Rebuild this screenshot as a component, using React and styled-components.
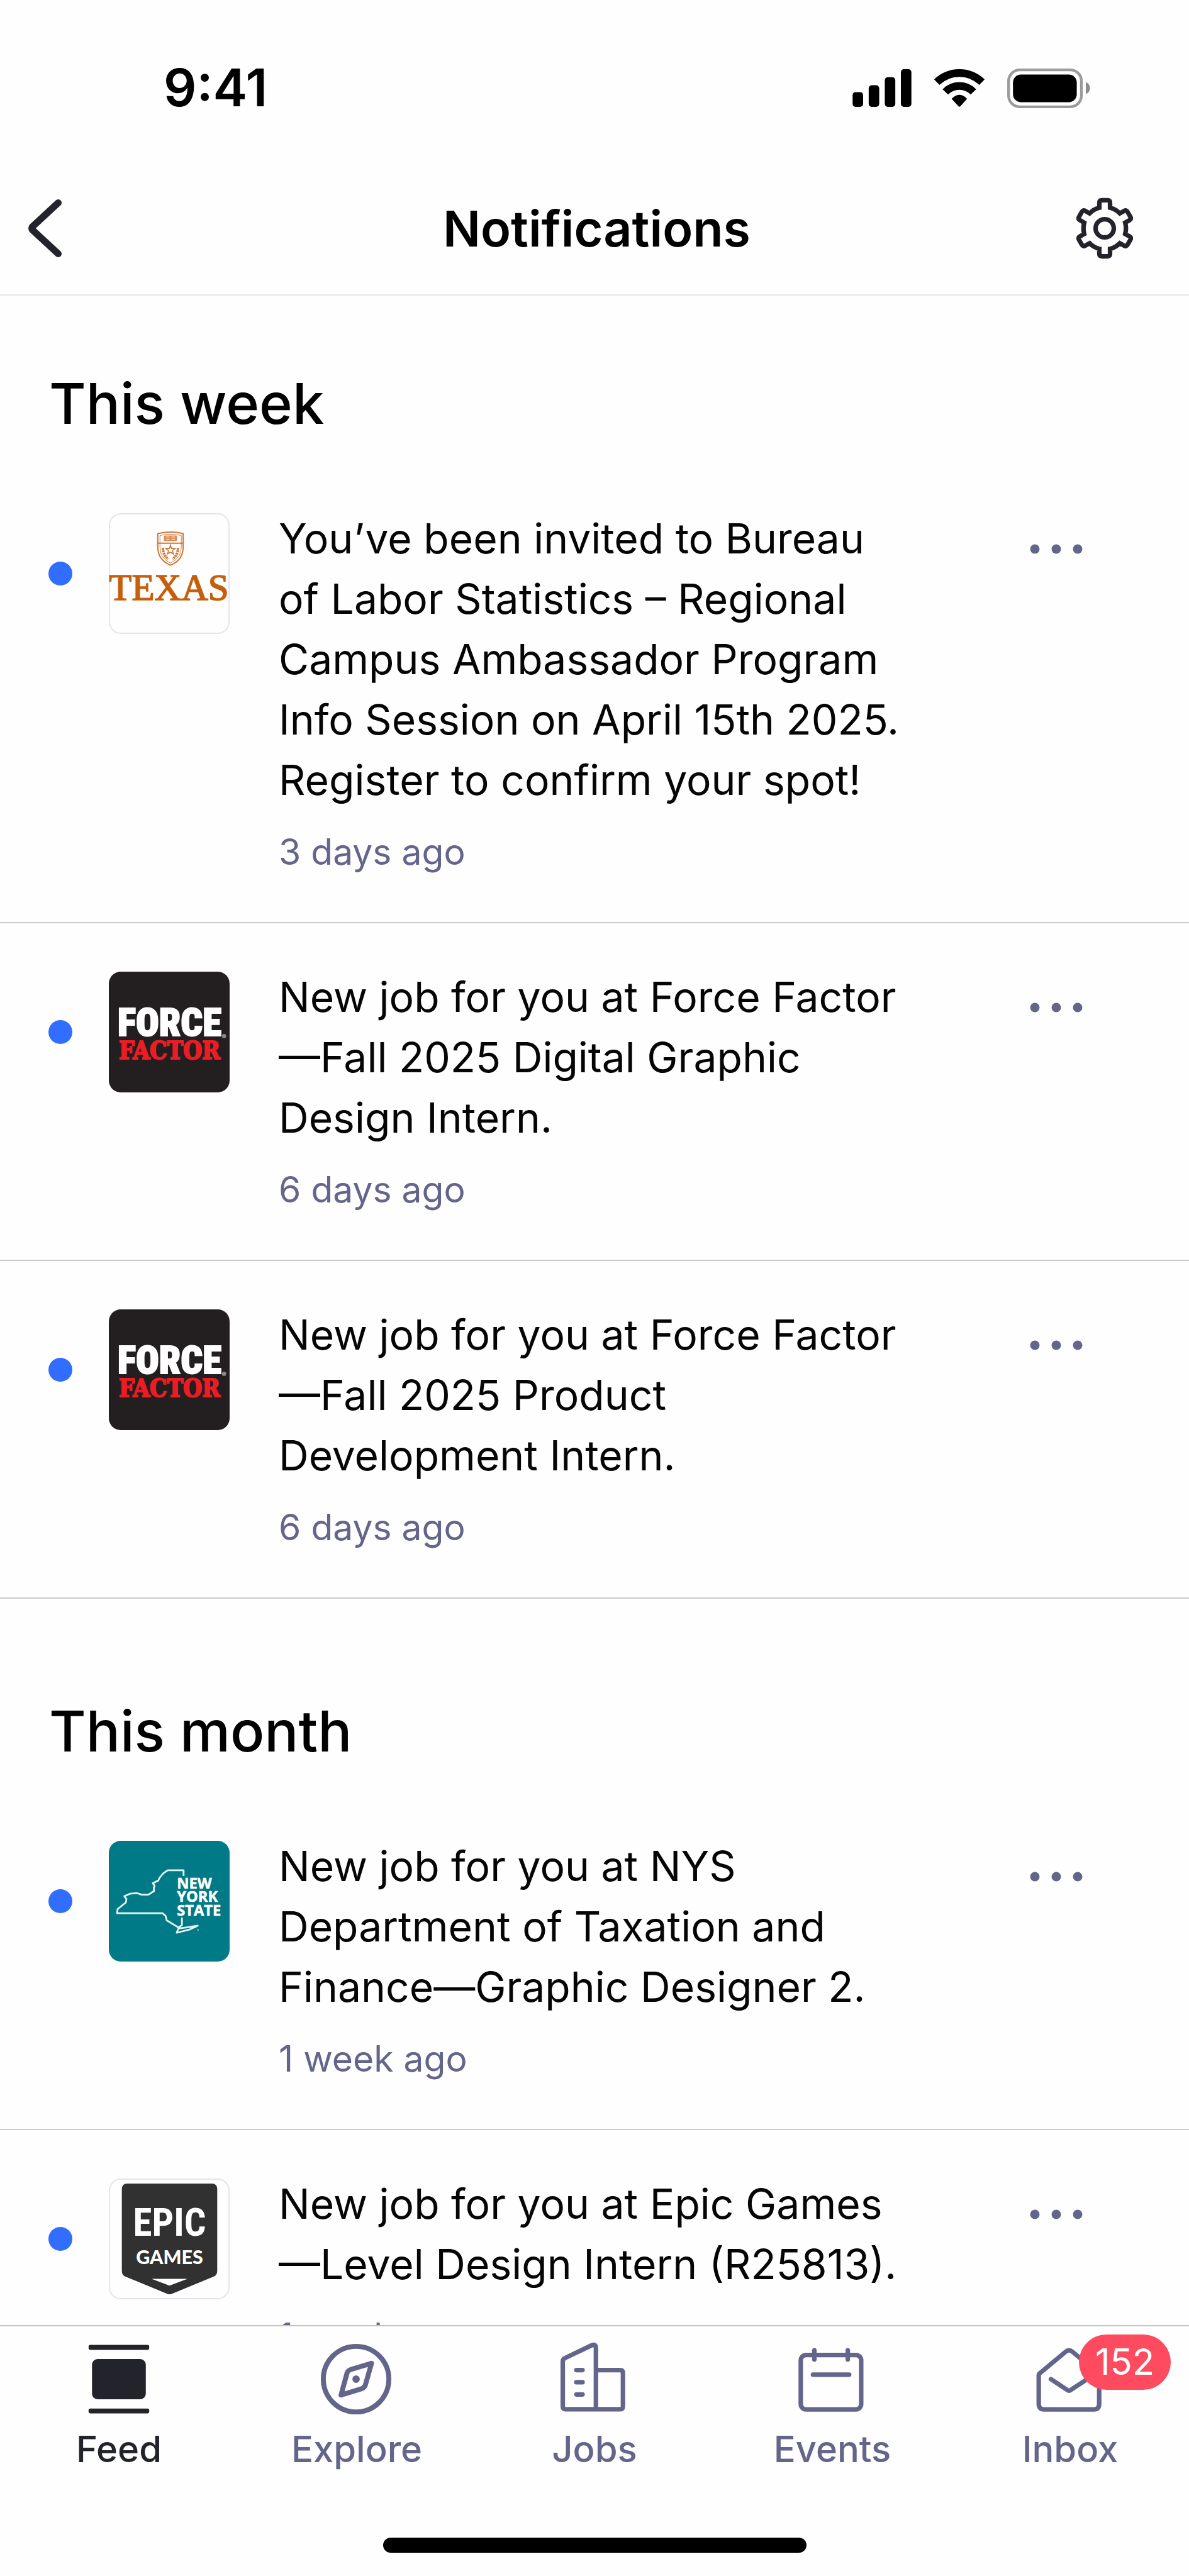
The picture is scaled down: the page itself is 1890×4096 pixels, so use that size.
import { useState } from 'react';
import styled, { createGlobalStyle } from 'styled-components';

const WEEK = [
  {
    id: 1,
    logo: 'texas',
    text: 'You’ve been invited to Bureau of Labor Statistics – Regional Campus Ambassador Program Info Session on April 15th 2025. Register to confirm your spot!',
    time: '3 days ago',
  },
  { id: 2, logo: 'force', text: 'New job for you at Force Factor —Fall 2025 Digital Graphic Design Intern.', time: '6 days ago' },
  { id: 3, logo: 'force', text: 'New job for you at Force Factor —Fall 2025 Product Development Intern.', time: '6 days ago' },
];

const MONTH = [
  { id: 4, logo: 'nys', text: 'New job for you at NYS Department of Taxation and Finance—Graphic Designer 2.', time: '1 week ago' },
  { id: 5, logo: 'epic', text: 'New job for you at Epic Games —Level Design Intern (R25813).', time: '1 week ago' },
];

const TABS = [
  { name: 'Feed', Icon: FeedIcon },
  { name: 'Explore', Icon: ExploreIcon },
  { name: 'Jobs', Icon: JobsIcon },
  { name: 'Events', Icon: EventsIcon },
  { name: 'Inbox', Icon: InboxIcon, count: 152 },
];

// six teeth around a ring, starting at the top
function gearPath() {
  const ring = 34.5;
  const tip = 45.5;
  const half = 8.7;
  const base = Math.sqrt(ring * ring - half * half);
  const parts = [];
  for (let i = 0; i < 6; i++) {
    const a = (i * Math.PI) / 3;
    const p = (x, y) =>
      `${(x * Math.cos(a) - y * Math.sin(a)).toFixed(2)} ${(x * Math.sin(a) + y * Math.cos(a)).toFixed(2)}`;
    parts.push(i === 0 ? `M${p(-half, -base)}` : `A${ring} ${ring} 0 0 1 ${p(-half, -base)}`);
    parts.push(`L${p(-half, -tip + 4)} Q${p(-half, -tip)} ${p(-half + 4, -tip)}`);
    parts.push(`L${p(half - 4, -tip)} Q${p(half, -tip)} ${p(half, -tip + 4)} L${p(half, -base)}`);
  }
  parts.push(`A${ring} ${ring} 0 0 1 ${-half} ${-base.toFixed(2)}Z`);
  return parts.join(' ');
}

function GearIcon() {
  return (
    <svg width="90" height="98" viewBox="-46 -50 92 100" fill="none" stroke="#23232b" strokeWidth="7.4">
      <path d={gearPath()} />
      <circle r="14.8" />
    </svg>
  );
}

function BackIcon() {
  return (
    <svg width="54" height="92" viewBox="0 0 54 92" fill="none" stroke="#23232b" strokeWidth="11" strokeLinecap="round" strokeLinejoin="round">
      <path d="M48.5 5.5 L8 43 Q5 46 8 49 L48.5 86.5" />
    </svg>
  );
}

function StatusIcons() {
  return (
    <>
      <svg width="94" height="60" viewBox="0 0 95 61">
        <rect x="0" y="37" width="17" height="24" rx="5" />
        <rect x="26" y="26" width="17" height="35" rx="5" />
        <rect x="52" y="13" width="17" height="48" rx="5" />
        <rect x="78" y="0" width="17" height="61" rx="5" />
      </svg>
      <svg width="82" height="60" viewBox="0 0 82 61">
        <path d="M4.5 21 A52.4 52.4 0 0 1 77.5 21" fill="none" stroke="#000" strokeWidth="12.4" />
        <path d="M18.3 36.7 A31.4 31.4 0 0 1 63.7 36.7" fill="none" stroke="#000" strokeWidth="12.4" />
        <path d="M29.5 49 Q28 47.8 30 46.4 Q41 36.4 52 46.4 Q54 47.8 52.5 49 L42.5 60 Q41 61.4 39.5 60 Z" />
      </svg>
      <svg width="132" height="63" viewBox="0 0 134 64">
        <rect x="2.2" y="2.2" width="117.6" height="59.6" rx="18" fill="none" stroke="#9b9b9b" strokeWidth="4.4" />
        <rect x="9.3" y="9.7" width="103" height="44.6" rx="13" />
        <path d="M127 21.5 Q133.7 25 133.7 31.5 Q133.7 38 127 41.5 Z" fill="#8c8c8c" />
      </svg>
    </>
  );
}

function FeedIcon() {
  return (
    <svg width="118" height="118" viewBox="0 0 120 120" fill="currentColor">
      <rect x="11" y="4.7" width="98" height="8" rx="2.5" />
      <rect x="16.5" y="27.5" width="87" height="65" rx="9" />
      <rect x="11" y="107.5" width="98" height="8" rx="2.5" />
    </svg>
  );
}

function ExploreIcon() {
  return (
    <svg width="118" height="118" viewBox="0 0 120 120" fill="none" stroke="currentColor" strokeWidth="8" strokeLinejoin="round">
      <circle cx="59" cy="60" r="53" />
      <path d="M84 34.3 L50 44.6 Q45.8 46 44.4 50 L34.7 85.7 L68 75.4 Q72.2 74 73.8 70 Z" />
      <circle cx="59" cy="60" r="6" fill="currentColor" stroke="none" />
    </svg>
  );
}

function JobsIcon() {
  return (
    <svg width="118" height="118" viewBox="0 0 120 120" fill="none" stroke="currentColor" strokeWidth="7.3" strokeLinecap="round">
      <path d="M62.3 108.7 V10 Q62.3 2.6 56 5 L12 26 Q8.7 28 8.7 31 V104 Q8.7 108.7 13.4 108.7 H101.5 Q106 108.7 106 104 V50 Q106 45.3 101.5 45.3 H62.3" />
      <path d="M30.7 45.3 H40.7 M30.7 65 H40.7 M30.7 84.7 H40.7" />
    </svg>
  );
}

function EventsIcon() {
  return (
    <svg width="118" height="118" viewBox="0 0 120 120" fill="none" stroke="currentColor" strokeWidth="7.3" strokeLinecap="round">
      <rect x="9" y="21" width="97.7" height="88" rx="8.5" />
      <path d="M31 13.3 V28.3 M85 13.3 V28.3 M28.7 52.7 H87.3" />
    </svg>
  );
}

function InboxIcon() {
  return (
    <svg width="118" height="118" viewBox="0 0 120 120" fill="none" stroke="currentColor" strokeWidth="7.3" strokeLinecap="round" strokeLinejoin="round">
      <path d="M9.3 54 Q9.3 51.6 11.5 50 L53 15.5 Q58.3 11.2 63.6 15.5 L105 50 Q107 51.6 107 54 V100 Q107 109 98.5 109 H18 Q9.3 109 9.3 100 Z" />
      <path d="M29 60 L55.5 77.6 Q58.3 79.6 61 77.6 L87.6 60" />
    </svg>
  );
}

function TexasLogo() {
  return (
    <svg viewBox="0 0 195 195">
      <g fill="none" stroke="#cf7535" strokeWidth="2">
        <path d="M79 33 Q100 28 120 33 V54 Q120 76 99.5 84 Q79 76 79 54 Z" />
        <path d="M82.5 36 Q100 32 117 36 V54 Q117 73 99.5 80.5 Q82.5 73 82.5 54 Z" strokeWidth="1" />
        <path d="M79 48.5 H120" />
        <path d="M87.5 56 Q87 67 96 74 M111.5 56 Q112 67 103 74" strokeWidth="4" strokeDasharray="3 1" />
        <path d="M99.5 51.5 L101.3 57 H107 L102.6 60.5 L104.3 66 L99.5 62.8 L94.7 66 L96.4 60.5 L92 57 H97.7 Z" strokeWidth="1.6" />
      </g>
      <rect x="89" y="36" width="21" height="9" rx="1.5" fill="#d98a55" />
      <path d="M92 38.5 H98 M101 38.5 H107 M92 42 H98 M101 42 H107" stroke="#f7dfcd" strokeWidth="1.2" />
      <LogoText $font="Liberation Serif" $size={60} $weight={400} x="97" y="140" textAnchor="middle" fill="#c65f0c" stroke="#c65f0c" strokeWidth="1.6">
        TEXAS
      </LogoText>
    </svg>
  );
}

function ForceLogo() {
  return (
    <svg viewBox="0 0 195 195">
      <rect width="195" height="195" fill="#231f20" />
      <LogoText $font="Roboto Condensed" $size={62} $weight={900} x="98" y="104" textAnchor="middle" fill="#fff" stroke="#fff" strokeWidth="2">
        FORCE
      </LogoText>
      <LogoText $font="DejaVu Serif Condensed" $size={39} $weight={700} x="98" y="141" textAnchor="middle" fill="#ed1c24" stroke="#ed1c24" strokeWidth="2">
        FACTOR
      </LogoText>
      <circle cx="186" cy="104" r="3.5" fill="#8a8788" />
    </svg>
  );
}

function NysLogo() {
  return (
    <svg viewBox="0 0 195 195">
      <rect width="195" height="195" fill="#007a87" />
      <g fill="none" stroke="#e9f7f8" strokeWidth="2.8" strokeLinejoin="round">
        <path d="M120.7 57 V47.5 H95 L88 52.5 L82 59.5 L80 64 L71 68.5 L74 73 L72.5 76 L73 81 L64 87 H53 L45.5 84.5 L34 85.5 L25 89.5 L28.5 94 L27.5 99.5 L14 110.5 L13.3 117 H86.5 L91.5 121 L93.5 128.5 L112.5 140 L118 136 V124" />
        <path d="M112.5 141.5 L128 139.5 L143.5 137 L131 143 L109.5 148.5 Z" />
      </g>
      <circle cx="144" cy="144" r="1.2" fill="#9bd0d5" />
      <LogoText $font="Open Sans" $size={24} $weight={700} x="110" y="77" fill="#fff" stroke="#fff" strokeWidth="0.6">NEW</LogoText>
      <LogoText $font="Open Sans" $size={24} $weight={700} x="110" y="99" fill="#fff" stroke="#fff" strokeWidth="0.6">YORK</LogoText>
      <LogoText $font="Open Sans" $size={24} $weight={700} x="110" y="121" fill="#fff" stroke="#fff" strokeWidth="0.6">STATE</LogoText>
    </svg>
  );
}

function EpicLogo() {
  return (
    <svg viewBox="0 0 195 195">
      <path d="M21 17 Q21 8 30 8 H166 Q175 8 175 17 V149 Q175 156 169 158.5 L102 186 Q98 188 94 186 L27 158.5 Q21 156 21 149 Z" fill="#313131" />
      <path d="M69 162 H127 L98 173 Z" fill="#fff" />
      <LogoText $font="Roboto Condensed" $size={62} $weight={700} x="98" y="92" textAnchor="middle" fill="#fff">EPIC</LogoText>
      <LogoText $font="Lato" $size={31} $weight={900} x="98" y="138" textAnchor="middle" fill="#fff">GAMES</LogoText>
    </svg>
  );
}

const LOGOS = { texas: TexasLogo, force: ForceLogo, nys: NysLogo, epic: EpicLogo };
const OUTLINED = ['texas', 'epic'];

function Notification({ item }) {
  const Logo = LOGOS[item.logo];
  return (
    <Row>
      <UnreadDot />
      <Avatar $outlined={OUTLINED.includes(item.logo)}>
        <Logo />
      </Avatar>
      <Body>
        <Message>{item.text}</Message>
        <Time>{item.time}</Time>
      </Body>
      <MoreButton aria-label="More">
        <svg width="84" height="16" viewBox="0 0 84 16" fill="#64658a">
          <circle cx="8" cy="8" r="7.5" />
          <circle cx="42" cy="8" r="7.5" />
          <circle cx="76" cy="8" r="7.5" />
        </svg>
      </MoreButton>
    </Row>
  );
}

function Group({ title, items }) {
  return (
    <section>
      <GroupTitle>{title}</GroupTitle>
      <List>
        {items.map((item) => (
          <Notification key={item.id} item={item} />
        ))}
      </List>
    </section>
  );
}

function App() {
  const [active, setActive] = useState('Feed');

  return (
    <Screen>
      <GlobalStyle />
      <Header>
        <StatusBar>
          <Clock>9:41</Clock>
          <StatusGroup>
            <StatusIcons />
          </StatusGroup>
        </StatusBar>
        <NavBar>
          <BackButton aria-label="Back">
            <BackIcon />
          </BackButton>
          <Title>Notifications</Title>
          <SettingsButton aria-label="Settings">
            <GearIcon />
          </SettingsButton>
        </NavBar>
      </Header>
      <Content>
        <Group title="This week" items={WEEK} />
        <Group title="This month" items={MONTH} />
      </Content>
      <Footer>
        <TabBar>
          {TABS.map(({ name, Icon, count }) => (
            <Tab key={name} $active={name === active} onClick={() => setActive(name)}>
              <TabIcon>
                <Icon />
                {count && <Badge>{count}</Badge>}
              </TabIcon>
              {name}
            </Tab>
          ))}
        </TabBar>
        <HomeIndicator />
      </Footer>
    </Screen>
  );
}

export default App;

const GlobalStyle = createGlobalStyle`
  * {
    box-sizing: border-box;
  }
  body {
    margin: 0;
    background: #fefefe;
    color: #050505;
    font-family: Inter, 'Liberation Sans', sans-serif;
  }
  h1, h2, p, ul {
    margin: 0;
    padding: 0;
  }
  button {
    padding: 0;
    border: 0;
    background: none;
    font-family: inherit;
    cursor: pointer;
  }
  svg {
    display: block;
  }
`;

const Screen = styled.div`
  display: flex;
  flex-direction: column;
  height: 100vh;
`;

const Header = styled.header`
  flex-shrink: 0;
  border-bottom: 2px solid #e5e5ec;
`;

const StatusBar = styled.div`
  display: flex;
  align-items: center;
  justify-content: space-between;
  height: 258px;
  padding: 90px 157px 68px 260px;
`;

const Clock = styled.span`
  color: #000;
  font-size: 82px;
  font-weight: 600;
  line-height: 100px;
`;

const StatusGroup = styled.div`
  display: flex;
  align-items: center;
  gap: 35px;
`;

const NavBar = styled.div`
  display: grid;
  grid-template-columns: 1fr auto 1fr;
  align-items: center;
  height: 210px;
  padding: 0 37px 0 44px;
`;

const BackButton = styled.button`
  justify-self: start;
`;

const SettingsButton = styled.button`
  justify-self: end;
  margin-right: 52px;
`;

const Title = styled.h1`
  color: #000;
  font-size: 79px;
  font-weight: 600;
  line-height: 96px;
`;

const Content = styled.main`
  display: flex;
  flex: 1;
  flex-direction: column;
  gap: 39px;
  min-height: 0;
  overflow: hidden;
`;

const GroupTitle = styled.h2`
  padding: 116px 78px 41px;
  color: #000;
  font-size: 90px;
  font-weight: 500;
  line-height: 112px;
`;

const List = styled.ul`
  list-style: none;
`;

const Row = styled.li`
  display: grid;
  grid-template-columns: 96px 192px minmax(0, 1fr) 192px;
  align-items: start;
  padding: 69px 115px 73px 77px;
  border-bottom: 2px solid #cbcbcd;
`;

const UnreadDot = styled.span`
  width: 38px;
  height: 38px;
  margin-top: 85px;
  border-radius: 50%;
  background: #316dff;
`;

const Avatar = styled.div`
  overflow: hidden;
  width: 192px;
  height: 192px;
  margin-top: 8px;
  border-radius: 19px;
  box-shadow: ${(props) => (props.$outlined ? 'inset 0 0 0 2px #e4e4ec' : 'none')};
`;

const LogoText = styled.text`
  font-family: '${(props) => props.$font}', 'Liberation Sans Narrow', sans-serif;
  font-size: ${(props) => props.$size}px;
  font-weight: ${(props) => props.$weight};
`;

const Body = styled.div`
  padding: 0 144px 0 78px;
`;

const Message = styled.p`
  font-size: 66px;
  line-height: 96px;
`;

const Time = styled.p`
  margin-top: 28px;
  color: #64658a;
  font-size: 57px;
  line-height: 77px;
`;

const MoreButton = styled.button`
  display: flex;
  align-items: center;
  justify-content: center;
  height: 96px;
  margin-top: 17px;
`;

const Footer = styled.footer`
  flex-shrink: 0;
  padding-bottom: 37px;
  border-top: 2px solid #c2c2c4;
`;

const TabBar = styled.nav`
  display: grid;
  grid-template-columns: repeat(5, 1fr);
  padding: 25px 0 105px;
`;

const Tab = styled.button`
  display: flex;
  flex-direction: column;
  align-items: center;
  gap: 16px;
  color: ${(props) => (props.$active ? '#23232b' : '#64658a')};
  font-size: 58px;
  font-weight: 500;
  line-height: 72px;
`;

const TabIcon = styled.span`
  position: relative;
`;

const Badge = styled.span`
  position: absolute;
  top: -12px;
  left: 73px;
  width: 146px;
  height: 88px;
  border-radius: 44px;
  background: #ff4b60;
  color: #fff;
  font-size: 58px;
  font-weight: 400;
  line-height: 86px;
  text-align: center;
`;

const HomeIndicator = styled.div`
  width: 673px;
  height: 24px;
  margin: 0 auto;
  border-radius: 12px;
  background: #000;
`;
